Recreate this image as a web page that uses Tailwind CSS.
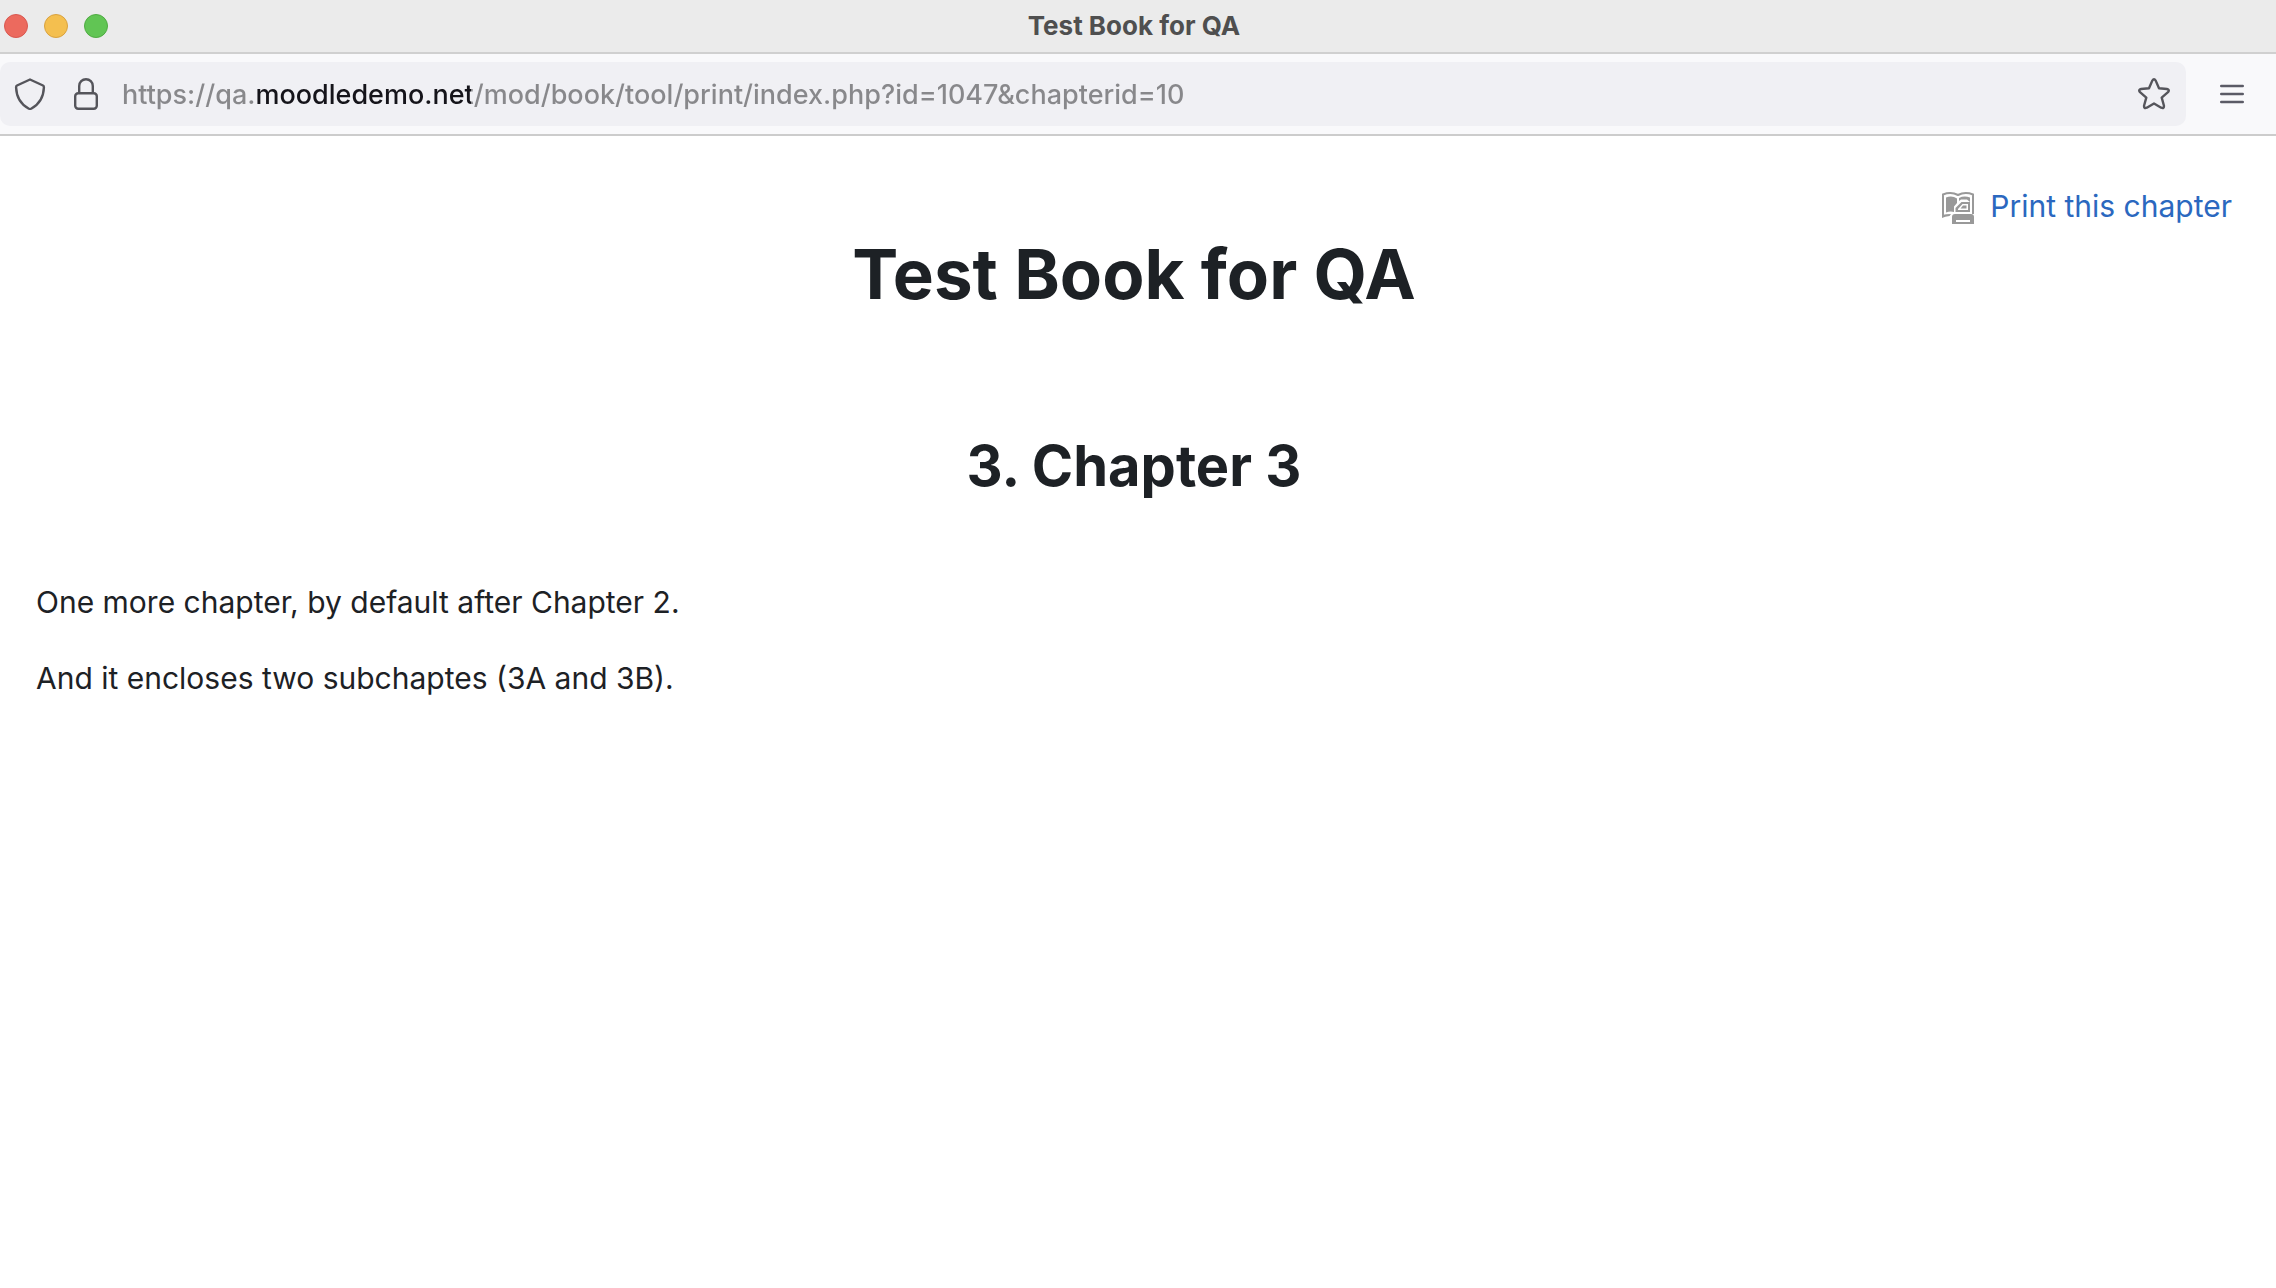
<!DOCTYPE html>
<html lang="en">
	<head>
		<meta charset="UTF-8" />
		<meta name="viewport" content="width=device-width, initial-scale=1.0" />
		<title>Test Book for QA</title>
		<script src="https://cdn.jsdelivr.net/npm/@tailwindcss/browser@4"></script>
	</head>
	<body class="min-h-screen bg-white font-['Inter',sans-serif] text-[#1d2125]">
		<header>
			<!-- Title bar -->
			<div
				class="grid grid-cols-[1fr_auto_1fr] items-center h-[54px] pl-1 pr-3 bg-[#ebebeb] border-b-2 border-[#d0d0d0]">
				<div class="flex gap-4">
					<button aria-label="Close" class="size-6 rounded-full bg-[#ec6a5e] border border-[#d95850]"></button>
					<button aria-label="Minimize" class="size-6 rounded-full bg-[#f4bf4f] border border-[#d9a23f]"></button>
					<button aria-label="Zoom" class="size-6 rounded-full bg-[#61c554] border border-[#4fab42]"></button>
				</div>
				<span class="text-[26px] leading-8 font-bold text-[#4f4f4f]">Test Book for QA</span>
			</div>
			<!-- Address bar -->
			<div
				class="flex items-center h-[82px] pr-8 gap-[34px] bg-[#f9f9fb] border-b-2 border-[#cccccc]">
				<div class="flex flex-1 items-center h-16 pl-[14px] pr-4 rounded-[10px] bg-[#f0f0f4]">
					<button aria-label="Tracking protection" class="mr-6">
						<svg class="size-8" viewBox="0 0 32 32" fill="none" stroke="#55555b" stroke-width="2.4" stroke-linejoin="round">
							<path d="M16 1.5 29 7.5Q30 8 29.9 9.5C29.5 20 25.5 26 17.5 30.5Q16 31.3 14.5 30.5C6.5 26 2.5 20 2.1 9.5Q2 8 3 7.5Z" />
						</svg>
					</button>
					<button aria-label="Site information" class="mr-5">
						<svg class="size-8" viewBox="0 0 32 32" fill="none" stroke="#55555b" stroke-width="2.4">
							<rect x="5.2" y="15.2" width="21.6" height="15.6" rx="3" />
							<path d="M9.2 15V8a6.8 6.8 0 0 1 13.6 0v7" />
						</svg>
					</button>
					<!-- The gradient darkens the domain part of the address -->
					<input
						type="text"
						aria-label="Address"
						value="https://qa.moodledemo.net/mod/book/tool/print/index.php?id=1047&amp;chapterid=10"
						class="flex-1 min-w-0 h-10 pt-0.5 text-[27px] font-medium text-transparent bg-clip-text bg-[linear-gradient(90deg,#88888b_132px,#15141a_132px,#15141a_349px,#88888b_349px)] outline-none" />
					<button aria-label="Bookmark this page">
						<svg class="size-8" viewBox="0 0 32 32" fill="none" stroke="#55555b" stroke-width="2.4" stroke-linejoin="round">
							<path d="M14.3 2.6Q16 0 17.7 2.6L21 10.3 28.9 11Q32 11.7 30 14.2L23.7 19.6 25.9 27.5Q26.3 30.8 23.2 29.7L16 25.5 8.8 29.7Q5.7 30.8 6.1 27.5L8.3 19.6 2 14.2Q0 11.7 3.1 11L11 10.3Z" />
						</svg>
					</button>
				</div>
				<button aria-label="Open application menu">
					<svg class="w-6 h-5" viewBox="0 0 24 20" stroke="#5b5b66" stroke-width="2.6" stroke-linecap="round">
						<path d="M1.3 2h21.4M1.3 10h21.4M1.3 18h21.4" />
					</svg>
				</button>
			</div>
		</header>
		<main class="flex flex-col pt-12 pl-9 pr-11">
			<a href="#" class="self-end flex items-center gap-4 text-[30px] leading-[44px] text-[#2b68bf]">
				<svg class="size-8 mt-1" viewBox="0 0 32 32" fill="#999">
					<!-- open book -->
					<path d="M1 24.5V2.5Q9-.5 16 3Q23-.5 31 2.5V22" fill="none" stroke="#999" stroke-width="2" />
					<path d="M0 23Q4 22 9 22L7.5 24Q3 24.5 0 26Z" />
					<path d="M4 5.5Q10 3 15 6.5V11L12 14.5V20Q8 19 4 20.5Z" />
					<path d="M17 6Q22 3.5 28 5.5V10L25 7.5H19L17 9Z" />
					<!-- printer -->
					<path d="M19.5 10H28V20H13.5V16Z" />
					<path d="M20.5 12H26V18H16V17Z" fill="#fff" />
					<path d="M21 13.5H24.5V16.5H18.5Z" />
					<path d="M13 22h16q3 0 3 3v7H10v-7q0-3 3-3Z" />
					<path d="M14 28h14v2H14Z" fill="#fff" />
				</svg>
				Print this chapter
			</a>
			<h1 class="mt-0.5 text-center text-[69px] leading-[88px] font-bold">Test Book for QA</h1>
			<h2 class="mt-28 text-center text-[56px] leading-[72px] font-bold">3. Chapter 3</h2>
			<p class="mt-[78px] text-[30px] leading-[44px]">One more chapter, by default after Chapter 2.</p>
			<p class="mt-8 text-[30px] leading-[44px]">And it encloses two subchaptes (3A and 3B).</p>
		</main>
	</body>
</html>
